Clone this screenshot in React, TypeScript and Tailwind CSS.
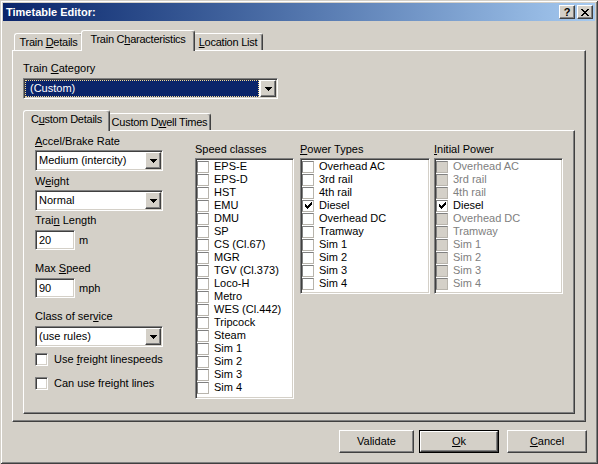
import React from 'react'

const sunken =
  'border border-t-[#808080] border-l-[#808080] border-r-white border-b-white shadow-[inset_1px_1px_0_#404040,inset_-1px_-1px_0_#d4d0c8]'
const raised =
  'border border-t-white border-l-white border-r-[#404040] border-b-[#404040] shadow-[inset_-1px_-1px_0_#808080,inset_1px_1px_0_#d4d0c8]'

function Arrow() {
  return (
    <svg width="7" height="4" viewBox="0 0 7 4" shapeRendering="crispEdges">
      <rect x="0" y="0" width="7" height="1" />
      <rect x="1" y="1" width="5" height="1" />
      <rect x="2" y="2" width="3" height="1" />
      <rect x="3" y="3" width="1" height="1" />
    </svg>
  )
}

const checkPx = [
  [6, 0], [5, 1], [6, 1], [0, 2], [4, 2], [5, 2], [6, 2], [0, 3], [1, 3], [3, 3], [4, 3], [5, 3],
  [0, 4], [1, 4], [2, 4], [3, 4], [4, 4], [1, 5], [2, 5], [3, 5], [2, 6],
]

function Check() {
  return (
    <svg width="7" height="7" viewBox="0 0 7 7" shapeRendering="crispEdges">
      {checkPx.map(([x, y]) => (
        <rect key={`${x}-${y}`} x={x} y={y} width="1" height="1" />
      ))}
    </svg>
  )
}

const closePx = [
  [0, 0], [1, 0], [6, 0], [7, 0], [1, 1], [2, 1], [5, 1], [6, 1], [2, 2], [3, 2], [4, 2], [5, 2],
  [3, 3], [4, 3], [2, 4], [3, 4], [4, 4], [5, 4], [1, 5], [2, 5], [5, 5], [6, 5], [0, 6], [1, 6], [6, 6], [7, 6],
]

function CloseGlyph() {
  return (
    <svg width="8" height="7" viewBox="0 0 8 7" shapeRendering="crispEdges">
      {closePx.map(([x, y]) => (
        <rect key={`${x}-${y}`} x={x} y={y} width="1" height="1" />
      ))}
    </svg>
  )
}

function Label({ children, className = '' }: { children: React.ReactNode; className?: string }) {
  return <div className={`h-[13px] leading-[13px] whitespace-nowrap ${className}`}>{children}</div>
}

function Combo({ value, className = '', focused = false }: { value: string; className?: string; focused?: boolean }) {
  return (
    <div className={`${sunken} h-[21px] bg-white p-[1px] flex ${className}`}>
      <div className="flex-1 min-w-0 pr-[1px] flex items-center">
        {focused ? (
          <div className="h-full w-full bg-[#0a246a] text-white border border-dotted border-[#f5db95] pl-[4px] flex items-center">
            {value}
          </div>
        ) : (
          <span className="pl-[2px] whitespace-nowrap">{value}</span>
        )}
      </div>
      <div className={`${raised} w-[16px] h-[17px] bg-[#d4d0c8] flex items-center justify-center`}>
        <Arrow />
      </div>
    </div>
  )
}

function TextBox({ value }: { value: string }) {
  return (
    <div className={`${sunken} w-[40px] h-[20px] bg-white pl-[3px] flex items-center`}>{value}</div>
  )
}

function Tab({ children, selected = false, className = '' }: { children: React.ReactNode; selected?: boolean; className?: string }) {
  const base =
    'bg-[#d4d0c8] border-t border-l border-r border-t-white border-l-white border-r-[#404040] rounded-t-[3px] shadow-[inset_-1px_0_0_#808080] flex items-center justify-center whitespace-nowrap'
  if (selected) {
    return (
      <div className={`relative z-10 -mb-px h-[21px] pb-[3px] ${base} ${className}`}>
        <span className="tracking-[-0.25px]">{children}</span>
      </div>
    )
  }
  return (
    <div className={`h-[17px] ${base} ${className}`}>
      <span className="tracking-[-0.25px]">{children}</span>
    </div>
  )
}

function ListItem({ label, checked = false, disabled = false }: { label: string; checked?: boolean; disabled?: boolean }) {
  const grey = disabled && !checked
  return (
    <div className="h-[13px] flex items-center">
      <div
        className={`w-[12px] h-[12px] border border-t-[#808080] border-l-[#808080] border-r-[#b8b4ac] border-b-[#b8b4ac] flex items-center justify-center ${grey ? 'bg-[#d4d0c8]' : 'bg-white'}`}
      >
        {checked && <Check />}
      </div>
      <span className={`ml-[5px] leading-[13px] whitespace-nowrap ${grey ? 'text-[#808080]' : ''}`}>{label}</span>
    </div>
  )
}

function CheckRow({ children, className = '' }: { children: React.ReactNode; className?: string }) {
  return (
    <div className={`h-[13px] flex items-center ${className}`}>
      <div className={`${sunken} w-[13px] h-[13px] bg-white`} />
      <span className="ml-[6px] leading-[13px] whitespace-nowrap">{children}</span>
    </div>
  )
}

function Button({ children, className = '', isDefault = false }: { children: React.ReactNode; className?: string; isDefault?: boolean }) {
  if (isDefault) {
    return (
      <div className={`h-[23px] border border-black ${className}`}>
        <div className={`${raised} h-full w-full bg-[#d4d0c8] flex items-center justify-center`}>
          <span>{children}</span>
        </div>
      </div>
    )
  }
  return (
    <div className={`${raised} h-[23px] bg-[#d4d0c8] flex items-center justify-center ${className}`}>
      <span>{children}</span>
    </div>
  )
}

const speedClasses = [
  'EPS-E', 'EPS-D', 'HST', 'EMU', 'DMU', 'SP', 'CS (Cl.67)', 'MGR', 'TGV (Cl.373)', 'Loco-H',
  'Metro', 'WES (Cl.442)', 'Tripcock', 'Steam', 'Sim 1', 'Sim 2', 'Sim 3', 'Sim 4',
]
const powerTypes = ['Overhead AC', '3rd rail', '4th rail', 'Diesel', 'Overhead DC', 'Tramway', 'Sim 1', 'Sim 2', 'Sim 3', 'Sim 4']

export default function App() {
  return (
    <div className="w-[598px] h-[464px] bg-[#d4d0c8] p-[3px] flex flex-col text-[11px] text-black font-['Liberation_Sans',Arial,sans-serif] shadow-[inset_1px_1px_0_#d4d0c8,inset_-1px_-1px_0_#404040,inset_2px_2px_0_#ffffff,inset_-2px_-2px_0_#808080]">
      {/* title bar */}
      <div className="h-[18px] bg-linear-to-r from-[#0a246a] to-[#a6caf0] flex items-center pl-[3px] pr-[2px]">
        <span className="text-white font-bold">Timetable Editor:</span>
        <div className="ml-auto flex gap-[2px]">
          <div className={`${raised} w-[16px] h-[14px] bg-[#d4d0c8] flex items-center justify-center font-bold text-[11px] leading-none`}>?</div>
          <div className={`${raised} w-[16px] h-[14px] bg-[#d4d0c8] flex items-center justify-center`}>
            <CloseGlyph />
          </div>
        </div>
      </div>

      <div className="pl-[9px] pt-[9px] w-[583px]">
        {/* outer tabs */}
        <div className="h-[20px] flex items-end pl-[2px]">
          <Tab className="w-[69px]">
            Train <u>D</u>etails
          </Tab>
          <Tab selected className="w-[114px] -mx-[2px]">
            Train C<u>h</u>aracteristics
          </Tab>
          <Tab className="w-[70px]">
            <u>L</u>ocation List
          </Tab>
        </div>
        <div className="h-[372px] w-[574px] border border-t-white border-l-white border-r-[#404040] border-b-[#404040] shadow-[inset_-1px_-1px_0_#808080] pt-[11px] pl-[10px]">
          <Label>
            Train <u>C</u>ategory
          </Label>
          <Combo className="mt-[3px] w-[255px]" value="(Custom)" focused />

          {/* inner tabs */}
          <div className="mt-[11px] h-[20px] flex items-end">
            <Tab selected className="w-[87px] -mr-[2px]">
              C<u>u</u>stom Details
            </Tab>
            <Tab className="w-[103px]">
              Custom D<u>w</u>ell Times
            </Tab>
          </div>
          <div className="h-[284px] w-[552px] border border-t-white border-l-white border-r-[#404040] border-b-[#404040] shadow-[inset_-1px_-1px_0_#808080] pl-[11px] flex items-start">
            {/* left column */}
            <div className="w-[128px] pt-[4px] flex flex-col">
              <Label>
                <u>A</u>ccel/Brake Rate
              </Label>
              <Combo className="mt-[2px] w-[128px]" value="Medium (intercity)" />
              <Label className="mt-[4px]">
                W<u>e</u>ight
              </Label>
              <Combo className="mt-[2px] w-[128px]" value="Normal" />
              <Label className="mt-[3px]">
                Trai<u>n</u> Length
              </Label>
              <div className="mt-[3px] flex items-center">
                <TextBox value="20" />
                <span className="ml-[4px]">m</span>
              </div>
              <Label className="mt-[12px]">
                Max <u>S</u>peed
              </Label>
              <div className="mt-[3px] flex items-center">
                <TextBox value="90" />
                <span className="ml-[4px]">mph</span>
              </div>
              <Label className="mt-[12px]">
                Class of ser<u>v</u>ice
              </Label>
              <Combo className="mt-[3px] w-[128px]" value="(use rules)" />
              <CheckRow className="mt-[6px]">
                Use <u>f</u>reight linespeeds
              </CheckRow>
              <CheckRow className="mt-[11px]">Can use freight lines</CheckRow>
            </div>

            {/* speed classes */}
            <div className="ml-[32px] w-[99px] pt-[12px]">
              <Label>Speed classes</Label>
              <div className={`${sunken} mt-[2px] bg-white p-[1px] pb-[4px]`}>
                {speedClasses.map((s) => (
                  <ListItem key={s} label={s} />
                ))}
              </div>
            </div>

            {/* power types */}
            <div className="ml-[6px] w-[130px] pt-[12px]">
              <Label>
                <u>P</u>ower Types
              </Label>
              <div className={`${sunken} mt-[2px] bg-white p-[1px] pb-[3px]`}>
                {powerTypes.map((s) => (
                  <ListItem key={s} label={s} checked={s === 'Diesel'} />
                ))}
              </div>
            </div>

            {/* initial power */}
            <div className="ml-[4px] w-[129px] pt-[12px]">
              <Label>
                <u>I</u>nitial Power
              </Label>
              <div className={`${sunken} mt-[2px] bg-white p-[1px] pb-[3px]`}>
                {powerTypes.map((s) => (
                  <ListItem key={s} label={s} checked={s === 'Diesel'} disabled />
                ))}
              </div>
            </div>
          </div>
        </div>
      </div>

      {/* bottom buttons */}
      <div className="mt-[8px] flex justify-end pr-[8px]">
        <Button className="w-[75px]">Validate</Button>
        <Button isDefault className="ml-[5px] w-[80px]">
          <u>O</u>k
        </Button>
        <Button className="ml-[8px] w-[80px]">
          <u>C</u>ancel
        </Button>
      </div>
    </div>
  )
}
